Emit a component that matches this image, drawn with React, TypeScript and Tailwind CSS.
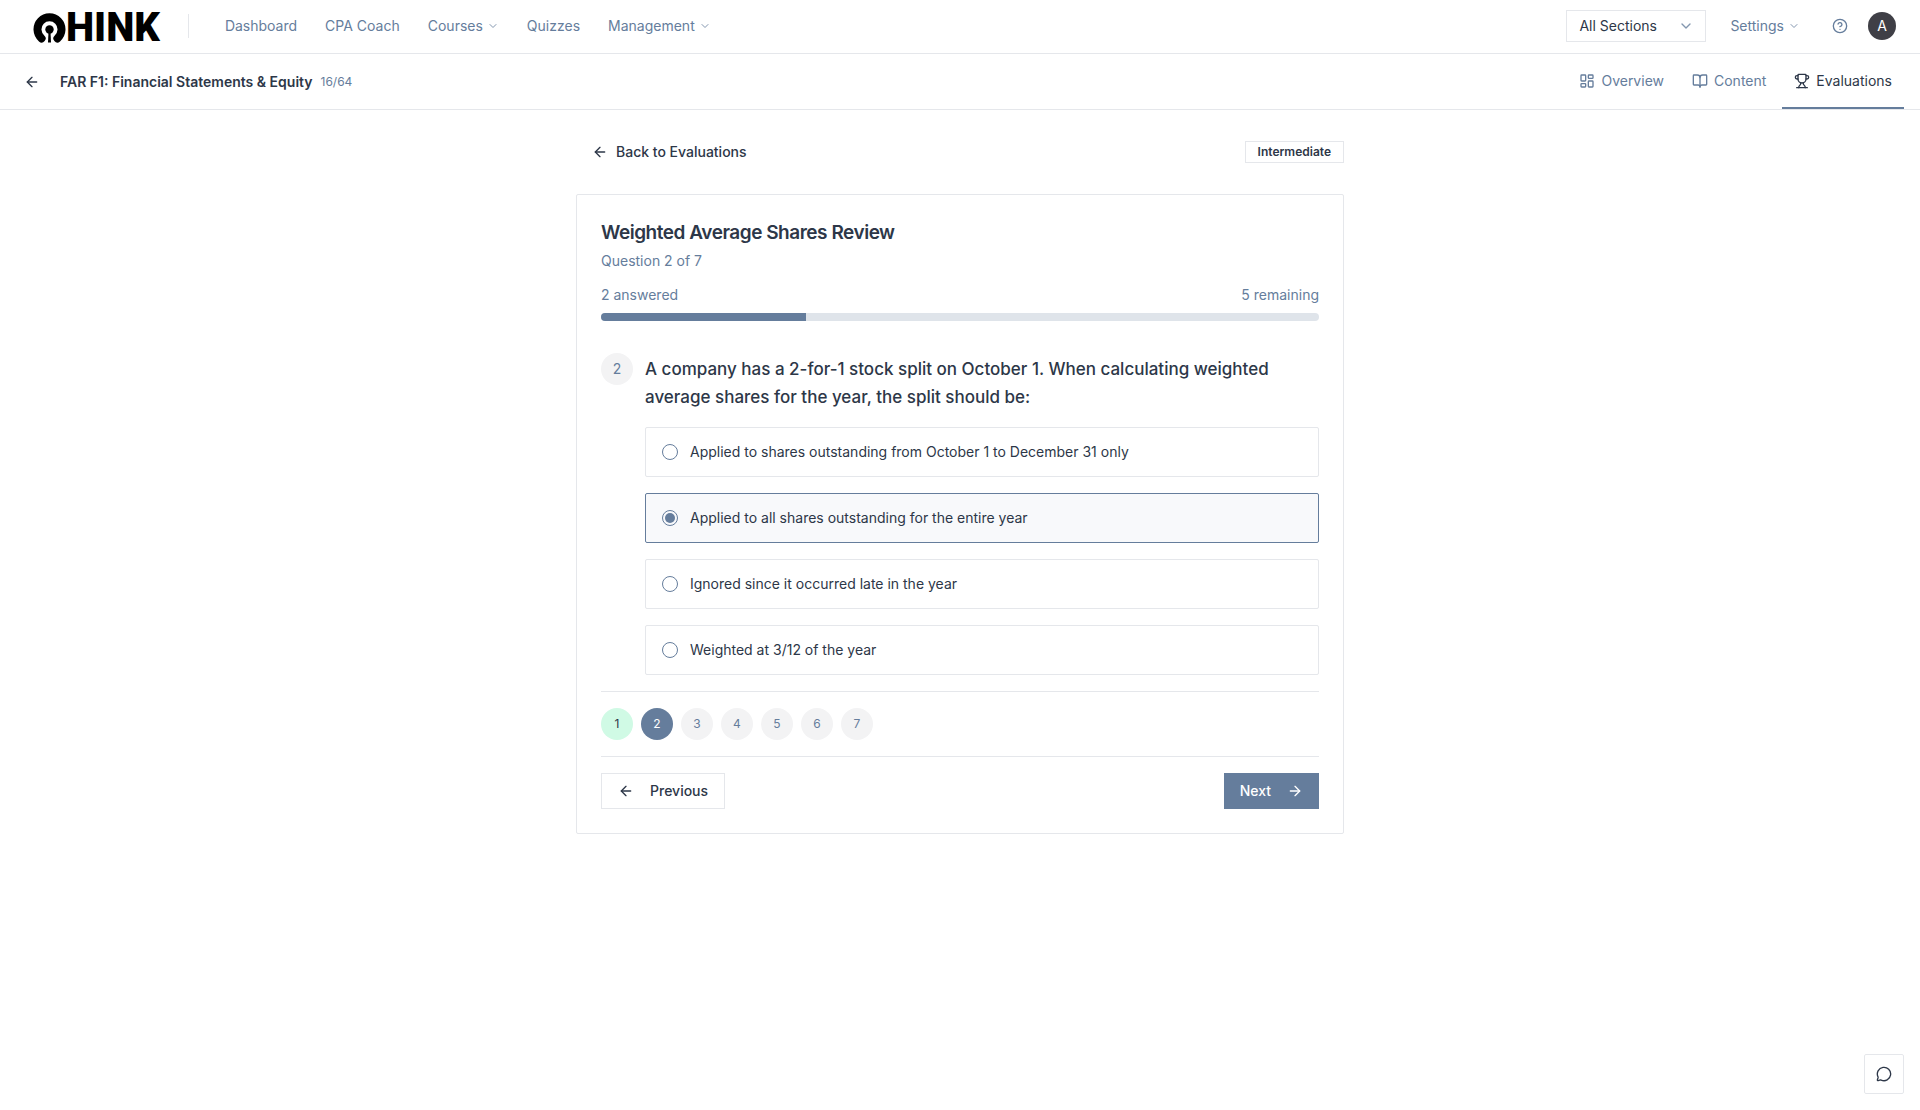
import { ArrowLeft, ArrowRight, BookOpen, ChevronDown, CircleHelp, LayoutDashboard, MessageCircle, Trophy } from 'lucide-react';

const navItems = [
  { label: 'Dashboard' },
  { label: 'CPA Coach' },
  { label: 'Courses', menu: true },
  { label: 'Quizzes' },
  { label: 'Management', menu: true },
];

const tabs = [
  { label: 'Overview', icon: LayoutDashboard, active: false },
  { label: 'Content', icon: BookOpen, active: false },
  { label: 'Evaluations', icon: Trophy, active: true },
];

const answers = [
  'Applied to shares outstanding from October 1 to December 31 only',
  'Applied to all shares outstanding for the entire year',
  'Ignored since it occurred late in the year',
  'Weighted at 3/12 of the year',
];

const questions = [1, 2, 3, 4, 5, 6, 7];

function questionColor(n: number) {
  if (n === 1) return 'bg-[#d0fae5] text-[#2d3748]';
  if (n === 2) return 'bg-[#657d9c] text-white';
  return 'bg-[#f3f3f4] text-[#657d9c]';
}

function Logo() {
  return (
    <a href="#" aria-label="Qhink" className="flex items-center h-8 mt-1 text-black">
      <svg className="w-[34px] h-[30px]" viewBox="0 0 34 30" fill="none">
        <path d="M9.6 25.400A12 12 0 1 1 25.4 25.400" stroke="currentColor" strokeWidth="8" strokeLinecap="round" />
        <circle cx="17.5" cy="16.500" r="4.200" fill="currentColor" />
        <path d="M16.500 19h2l.5 10.500h-3z" fill="currentColor" />
      </svg>
      <span className="font-[Roboto] font-black text-[40px] leading-8">HINK</span>
    </a>
  );
}

function TopBar() {
  return (
    <header className="flex items-center justify-between h-[54px] pl-8 pr-6 pb-px border-b border-[#e5e7eb]">
      <div className="flex items-center">
        <Logo />
        <div className="w-px h-6 ml-7 mr-9 bg-[#e5e7eb]" />
        <nav className="flex items-center gap-7 text-[#657d9c]">
          {navItems.map((item) => (
            <a key={item.label} href="#" className="flex items-center gap-1">
              {item.label}
              {item.menu && <ChevronDown className="w-3 h-3 opacity-80" />}
            </a>
          ))}
        </nav>
      </div>
      <div className="flex items-center">
        <div className="relative">
          <select aria-label="Section" className="w-[140px] h-8 pl-3 pr-8 border border-[#e5e7eb] bg-white appearance-none">
            <option>All Sections</option>
          </select>
          <ChevronDown className="absolute right-3 top-2 w-4 h-4 text-[#657d9c] opacity-80 pointer-events-none" />
        </div>
        <button className="flex items-center gap-1 ml-6 text-[#657d9c]">
          Settings
          <ChevronDown className="w-3 h-3 opacity-80" />
        </button>
        <button aria-label="Help" className="ml-8 text-[#657d9c]">
          <CircleHelp className="w-4 h-4" />
        </button>
        <button className="w-7 h-7 ml-5 rounded-full bg-[#3f3f46] text-white">A</button>
      </div>
    </header>
  );
}

function CourseBar() {
  return (
    <div className="flex justify-between h-14 pl-6 pr-4 border-b border-[#e5e7eb]">
      <div className="flex items-center">
        <button aria-label="Back">
          <ArrowLeft className="w-4 h-4" />
        </button>
        <h1 className="ml-5 font-semibold">FAR F1: Financial Statements & Equity</h1>
        <span className="ml-2 text-xs text-[#657d9c]">16/64</span>
      </div>
      <nav className="flex gap-1">
        {tabs.map(({ label, icon: Icon, active }) => (
          <a
            key={label}
            href="#"
            className={`flex items-center gap-1.5 px-3 border-b-2 ${active ? 'border-[#657d9c]' : 'border-transparent text-[#657d9c]'}`}
          >
            <Icon className="w-4 h-4" />
            {label}
          </a>
        ))}
      </nav>
    </div>
  );
}

function QuizCard() {
  return (
    <section className="p-6 border border-[#e5e7eb] rounded-xs">
      <h2 className="text-[19px] font-semibold tracking-tight leading-7">Weighted Average Shares Review</h2>
      <p className="mt-1 text-[#657d9c]">Question 2 of 7</p>
      <div className="flex justify-between mt-3.5 text-[#657d9c]">
        <span>2 answered</span>
        <span>5 remaining</span>
      </div>
      <div className="h-2 mt-2 rounded-full overflow-hidden bg-[#dfe4ea]">
        <div className="h-full bg-[#657d9c]" style={{ width: `${(2 / 7) * 100}%` }} />
      </div>

      <div className="flex gap-3 mt-8">
        <span className="flex items-center justify-center w-8 h-8 shrink-0 rounded-full bg-[#f3f3f4] text-[#657d9c]">2</span>
        <fieldset className="flex-1 min-w-0">
          <legend className="pt-0.5 mb-4 text-[17px] font-medium leading-7">
            A company has a 2-for-1 stock split on October 1. When calculating weighted average shares for the year, the split should be:
          </legend>
          <div className="flex flex-col gap-4">
            {answers.map((answer, i) => (
              <label
                key={answer}
                className="flex items-center gap-3 px-4 py-3.5 border border-[#e5e7eb] rounded-xs has-checked:border-[#657d9c] has-checked:bg-[#f8f9fb]"
              >
                <input
                  type="radio"
                  name="answer"
                  defaultChecked={i === 1}
                  className="w-4 h-4 appearance-none rounded-full border border-[#657d9c] bg-clip-content p-0.5 checked:bg-[#657d9c]"
                />
                {answer}
              </label>
            ))}
          </div>
        </fieldset>
      </div>

      <div className="flex gap-2 py-4 mt-4 border-y border-[#e5e7eb]">
        {questions.map((n) => (
          <button key={n} className={`w-8 h-8 rounded-full text-xs ${questionColor(n)}`}>
            {n}
          </button>
        ))}
      </div>

      <div className="flex justify-between pt-4">
        <button className="flex items-center gap-4 h-9 px-4 border border-[#e5e7eb] font-medium">
          <ArrowLeft className="w-4 h-4" />
          Previous
        </button>
        <button className="flex items-center gap-4 h-9 px-4 bg-[#657d9c] text-white font-medium">
          Next
          <ArrowRight className="w-4 h-4" />
        </button>
      </div>
    </section>
  );
}

export default function App() {
  return (
    <div className="min-h-screen bg-white font-[Inter,sans-serif] text-sm text-[#2d3748]">
      <TopBar />
      <CourseBar />
      <main className="max-w-3xl py-6 mx-auto">
        <div className="flex items-center justify-between mb-6">
          <button className="flex items-center gap-2 h-9 px-4 font-medium">
            <ArrowLeft className="w-4 h-4" />
            Back to Evaluations
          </button>
          <span className="px-3 py-0.5 border border-[#e5e7eb] text-xs font-semibold">Intermediate</span>
        </div>
        <QuizCard />
      </main>
      <button aria-label="Open chat" className="fixed right-4 bottom-4 flex items-center justify-center w-10 h-10 border border-[#e5e7eb] rounded-xs bg-white">
        <MessageCircle className="w-4 h-4" />
      </button>
    </div>
  );
}
